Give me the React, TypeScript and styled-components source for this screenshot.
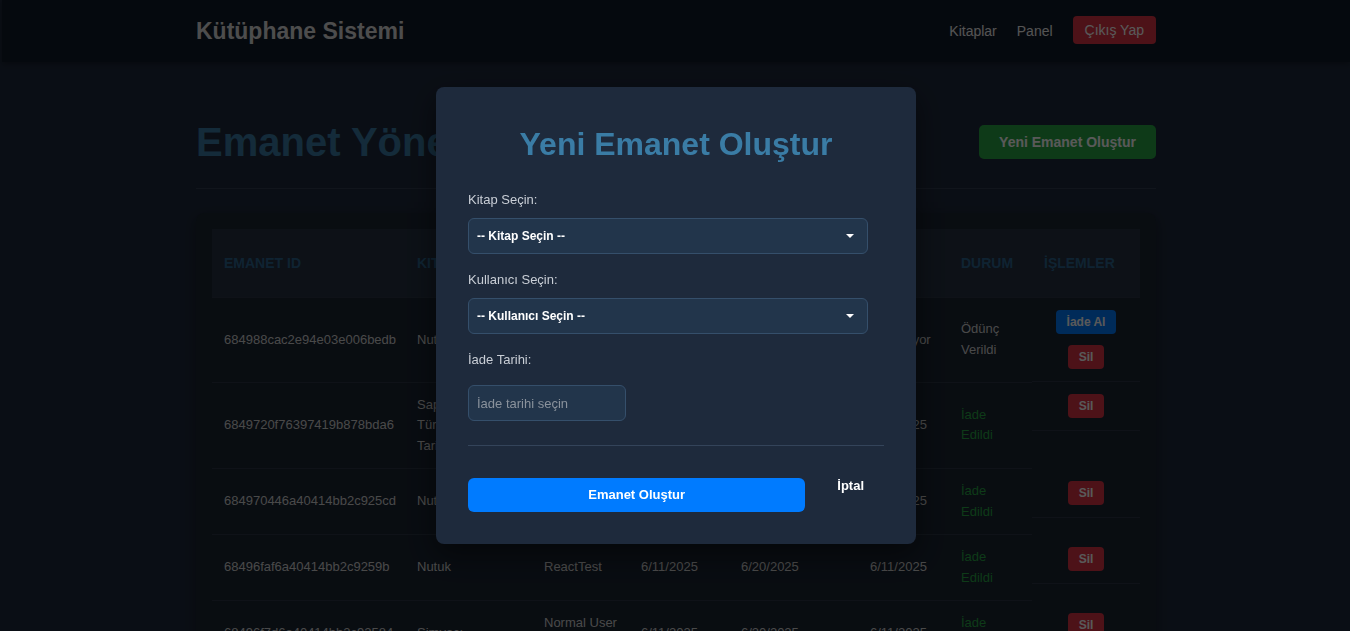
import React from "react";
import styled, { createGlobalStyle } from "styled-components";

const GlobalStyle = createGlobalStyle`
  html, body { margin: 0; padding: 0; }
  body {
    background: #1f2a3d;
    font-family: "Liberation Sans", Arial, sans-serif;
    color: #d2d2d2;
    overflow: hidden;
    padding-left: 2px;
  }
  * { box-sizing: border-box; }
`;

const FONT = `"Liberation Sans", Arial, sans-serif`;

const Header = styled.header`
  background: #111a28;
  height: 62px;
  display: flex;
  justify-content: center;
  box-shadow: 0 2px 6px rgba(0, 0, 0, 0.3);
`;

const HeaderInner = styled.div`
  width: 960px;
  display: flex;
  align-items: center;
  justify-content: space-between;
`;

const Brand = styled.div`
  font-size: 23px;
  font-weight: 700;
  color: #dcdcdc;
`;

const Nav = styled.nav`
  display: flex;
  align-items: center;
  gap: 20px;
`;

const NavLink = styled.a`
  color: #f0f0f0;
  font-size: 14px;
  line-height: 16px;
  text-decoration: none;
`;

const LogoutButton = styled.button`
  background: #dc3545;
  color: #fff;
  border: none;
  border-radius: 4px;
  padding: 6px 12px;
  margin-top: -2px;
  font: 14px/16px ${FONT};
`;

const Main = styled.main`
  width: 960px;
  margin: 0 auto;
  padding-top: 56px;
`;

const TitleRow = styled.div`
  display: flex;
  align-items: center;
  justify-content: space-between;
  padding-bottom: 22px;
  border-bottom: 1px solid #313c50;
`;

const PageTitle = styled.h1`
  margin: 0;
  font-size: 40px;
  line-height: 48px;
  font-weight: 700;
  color: #3a7ca5;
`;

const CreateButton = styled.button`
  background: #28a745;
  color: #fff;
  border: none;
  border-radius: 5px;
  padding: 9px 20px;
  margin-top: -1px;
  font: 700 14px/16px ${FONT};
`;

const Card = styled.div`
  margin-top: 24px;
  background: #1a2533;
  border-radius: 8px;
  padding: 16px;
  box-shadow: 0 4px 14px rgba(0, 0, 0, 0.35);
`;

const Table = styled.table`
  width: 100%;
  border-collapse: collapse;
  table-layout: fixed;
`;

const Col = styled.col<{ $w: number }>`
  width: ${(p) => p.$w}px;
`;

const Th = styled.th`
  background: #253142;
  color: #2c6690;
  text-align: left;
  text-transform: uppercase;
  font: 700 14px/20px ${FONT};
  padding: 14px 12px;
  border-bottom: 1px solid #2b3645;
`;

const Td = styled.td`
  padding: 12px;
  font: 13px/20.5px ${FONT};
  color: #d2d2d2;
  border-bottom: 1px solid #2b3645;
  vertical-align: middle;
`;

const ActionsCell = styled(Td)`
  display: flex;
  flex-direction: column;
  align-items: center;
  gap: 11px;
`;

const Status = styled.span<{ $returned: boolean }>`
  color: ${(p) => (p.$returned ? "#28a745" : "#d2d2d2")};
`;

const SmallButton = styled.button<{ $variant: "primary" | "danger" }>`
  background: ${(p) => (p.$variant === "primary" ? "#007bff" : "#dc3545")};
  color: #fff;
  border: none;
  border-radius: 4px;
  padding: 4px 11px;
  font: 700 12px/16px ${FONT};
`;

const Overlay = styled.div`
  position: fixed;
  inset: 0;
  padding-left: 2px;
  background: rgba(0, 0, 0, 0.65);
  display: flex;
  align-items: center;
  justify-content: center;
`;

const Modal = styled.div`
  width: 480px;
  background: #1e2a3c;
  border-radius: 8px;
  padding: 32px;
  box-shadow: 0 10px 30px rgba(0, 0, 0, 0.5);
`;

const ModalTitle = styled.h2`
  margin: 6px 0 29px;
  font: 700 32px/38px ${FONT};
  text-align: center;
  color: #3a7ca5;
`;

const FormGroup = styled.div<{ $last?: boolean }>`
  margin-bottom: ${(p) => (p.$last ? 24 : 18)}px;
`;

const Label = styled.label<{ $space?: number }>`
  display: block;
  margin-bottom: ${(p) => p.$space ?? 10}px;
  font: 13px/16px ${FONT};
  color: #c9ced6;
`;

const SelectWrap = styled.div`
  position: relative;
  width: 400px;
  &::after {
    content: "";
    position: absolute;
    right: 14px;
    top: 16px;
    border-left: 4px solid transparent;
    border-right: 4px solid transparent;
    border-top: 4px solid #fff;
    pointer-events: none;
  }
`;

const Select = styled.select`
  width: 100%;
  height: 36px;
  appearance: none;
  background: #22354b;
  border: 1px solid #354f6b;
  border-radius: 6px;
  color: #fff;
  font: 700 12px ${FONT};
  padding: 0 8px;
`;

const DateInput = styled.input`
  width: 158px;
  height: 36px;
  background: #22354b;
  border: 1px solid #354f6b;
  border-radius: 6px;
  color: #fff;
  font: 13px ${FONT};
  padding: 0 8px;
  &::placeholder {
    color: #8a929c;
  }
`;

const ModalActions = styled.div`
  display: flex;
  align-items: flex-start;
  gap: 12px;
  border-top: 1px solid #34445a;
  padding-top: 32px;
`;

const SubmitButton = styled.button`
  flex: 1;
  background: #007bff;
  color: #fff;
  border: none;
  border-radius: 6px;
  padding: 9px 0;
  font: 700 13px/16px ${FONT};
`;

const CancelButton = styled.button`
  background: none;
  border: none;
  color: #fff;
  padding: 0 20px;
  font: 700 13px/16px ${FONT};
`;

type Loan = {
  id: string;
  book: string;
  user: string;
  borrowed: string;
  due: string;
  returned: string;
  done: boolean;
};

const loans: Loan[] = [
  { id: "684988cac2e94e03e006bedb", book: "Nutuk", user: "ReactTest", borrowed: "6/11/2025", due: "6/25/2025", returned: "Bekleniyor", done: false },
  { id: "6849720f76397419b878bda6", book: "Sapiens: İnsan Türünün Kısa Tarihi", user: "ReactTest", borrowed: "6/11/2025", due: "6/20/2025", returned: "6/11/2025", done: true },
  { id: "684970446a40414bb2c925cd", book: "Nutuk", user: "ReactTest", borrowed: "6/11/2025", due: "6/20/2025", returned: "6/11/2025", done: true },
  { id: "68496faf6a40414bb2c9259b", book: "Nutuk", user: "ReactTest", borrowed: "6/11/2025", due: "6/20/2025", returned: "6/11/2025", done: true },
  { id: "68496f7d6a40414bb2c92584", book: "Simyacı", user: "Normal User Test", borrowed: "6/11/2025", due: "6/20/2025", returned: "6/11/2025", done: true },
  { id: "68496f446a40414bb2c92571", book: "Nutuk", user: "ReactTest", borrowed: "6/11/2025", due: "6/20/2025", returned: "6/11/2025", done: true },
];

const widths = [193, 127, 97, 100, 129, 91, 83, 108];
const headers = ["Emanet ID", "Kitap", "Kullanıcı", "Ödünç Tarihi", "Son Tarih", "İade Tarihi", "Durum", "İşlemler"];

export default function App() {
  return (
    <>
      <GlobalStyle />
      <Header>
        <HeaderInner>
          <Brand>Kütüphane Sistemi</Brand>
          <Nav>
            <NavLink href="#">Kitaplar</NavLink>
            <NavLink href="#">Panel</NavLink>
            <LogoutButton>Çıkış Yap</LogoutButton>
          </Nav>
        </HeaderInner>
      </Header>
      <Main>
        <TitleRow>
          <PageTitle>Emanet Yönetimi</PageTitle>
          <CreateButton>Yeni Emanet Oluştur</CreateButton>
        </TitleRow>
        <Card>
          <Table>
            <colgroup>
              {widths.map((w, i) => (
                <Col key={i} $w={w} />
              ))}
            </colgroup>
            <thead>
              <tr>
                {headers.map((h) => (
                  <Th key={h}>{h}</Th>
                ))}
              </tr>
            </thead>
            <tbody>
              {loans.map((l) => (
                <tr key={l.id}>
                  <Td>{l.id}</Td>
                  <Td>{l.book}</Td>
                  <Td>{l.user}</Td>
                  <Td>{l.borrowed}</Td>
                  <Td>{l.due}</Td>
                  <Td>{l.returned}</Td>
                  <Td>
                    <Status $returned={l.done}>{l.done ? "İade Edildi" : "Ödünç Verildi"}</Status>
                  </Td>
                  <ActionsCell>
                    {!l.done && <SmallButton $variant="primary">İade Al</SmallButton>}
                    <SmallButton $variant="danger">Sil</SmallButton>
                  </ActionsCell>
                </tr>
              ))}
            </tbody>
          </Table>
        </Card>
      </Main>
      <Overlay>
        <Modal>
          <ModalTitle>Yeni Emanet Oluştur</ModalTitle>
          <FormGroup>
            <Label>Kitap Seçin:</Label>
            <SelectWrap>
              <Select defaultValue="">
                <option value="">-- Kitap Seçin --</option>
              </Select>
            </SelectWrap>
          </FormGroup>
          <FormGroup>
            <Label>Kullanıcı Seçin:</Label>
            <SelectWrap>
              <Select defaultValue="">
                <option value="">-- Kullanıcı Seçin --</option>
              </Select>
            </SelectWrap>
          </FormGroup>
          <FormGroup $last>
            <Label $space={17}>İade Tarihi:</Label>
            <DateInput type="text" placeholder="İade tarihi seçin" />
          </FormGroup>
          <ModalActions>
            <SubmitButton>Emanet Oluştur</SubmitButton>
            <CancelButton>İptal</CancelButton>
          </ModalActions>
        </Modal>
      </Overlay>
    </>
  );
}
